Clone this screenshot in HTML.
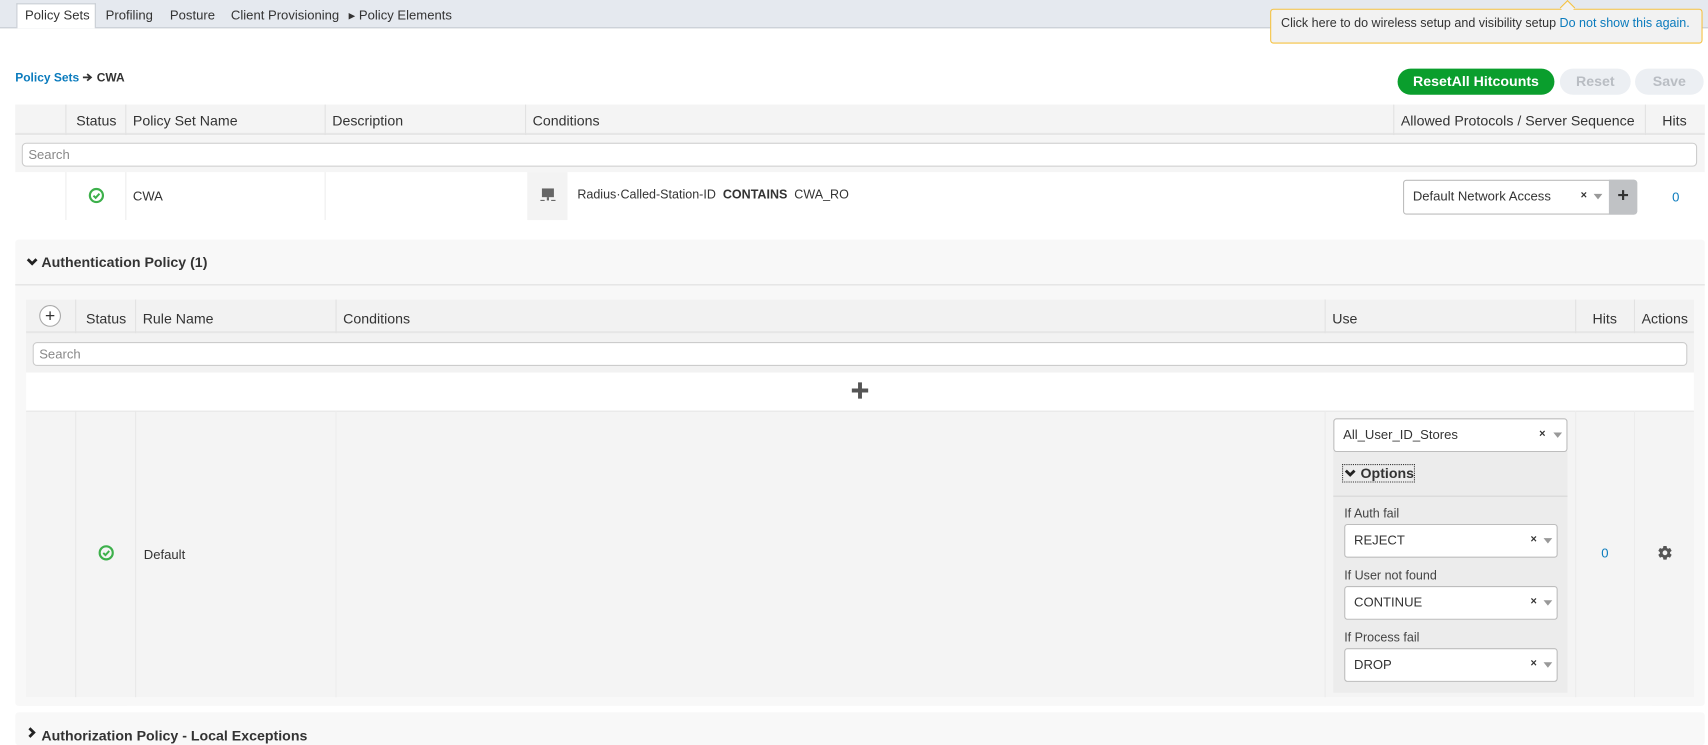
<!DOCTYPE html>
<html><head><meta charset="utf-8"><style>
html,body{margin:0;padding:0;background:#fff;width:1708px;height:739px;overflow:hidden}
#w{position:absolute;left:0;top:0;width:1568px;height:678px;transform:scale(1.0893);transform-origin:0 0;font-family:"Liberation Sans",Arial,sans-serif;font-size:12px;color:#333}
.a{position:absolute}
.t{position:absolute;white-space:nowrap}
.bold{font-weight:bold}
.blue{color:#0a7bbd}
.vl{position:absolute;width:1px;background:#e2e2e2}
.sel{position:absolute;background:#fff;border:1px solid #bdbdbd;border-radius:3px;box-sizing:border-box}
.sel .x{position:absolute;font-size:10px;font-weight:bold;color:#333}
.sel .v{position:absolute;width:0;height:0;border-left:4px solid transparent;border-right:4px solid transparent;border-top:5px solid #999}
.inp{position:absolute;background:#fff;border:1px solid #ccc;border-radius:4px;box-sizing:border-box;color:#888;font-size:12px;padding:3px 5px}
</style></head><body><div id="w">
<div class="a" style="left:0;top:0;width:1568px;height:25px;background:#e5e9ef;border-bottom:1px solid #c6cbd2"></div>
<div class="a" style="left:15px;top:3px;width:73px;height:23px;background:#fff;border:1px solid #c6cbd2;border-bottom:none;box-sizing:border-box"></div>
<div class="t" style="left:23px;top:7px">Policy Sets</div>
<div class="t" style="left:97px;top:7px">Profiling</div>
<div class="t" style="left:156px;top:7px">Posture</div>
<div class="t" style="left:212px;top:7px">Client Provisioning</div>
<div class="t" style="left:320px;top:7px"><span style="font-size:8px;position:relative;top:-1px">▶</span> Policy Elements</div>
<div class="a" style="left:1166px;top:8px;width:397px;height:32px;background:#f2f2f2;border:1px solid #f5c242;border-radius:3px;box-sizing:border-box"></div>
<div class="a" style="left:1434px;top:2px;width:9px;height:9px;background:#f2f2f2;border-left:1px solid #f5c242;border-top:1px solid #f5c242;transform:rotate(45deg)"></div>
<div class="t" style="left:1176px;top:16px;font-size:11.5px">Click here to do wireless setup and visibility setup <span class="blue">Do not show this again.</span></div>
<svg class="a" style="left:1574px;top:9px" width="10" height="10" viewBox="0 0 10 10"><path d="M1 1L9 9M9 1L1 9" stroke="#aaa" stroke-width="2"/></svg>
<div class="t bold" style="left:14px;top:66px;font-size:11px"><span class="blue">Policy Sets</span> <svg width="10" height="8" viewBox="0 0 10 8" style="vertical-align:0"><path d="M0 4H7M4 1L7.5 4L4 7" stroke="#333" stroke-width="1.6" fill="none"/></svg> CWA</div>
<div class="a" style="left:1283px;top:63px;width:144px;height:24px;background:#0a9e2d;border-radius:12px;color:#fff;font-weight:bold;font-size:13px;text-align:center;line-height:24px">ResetAll Hitcounts</div>
<div class="a" style="left:1432px;top:63px;width:65px;height:24px;background:#eceff3;border-radius:12px;color:#b9bdc3;font-weight:bold;font-size:13px;text-align:center;line-height:24px">Reset</div>
<div class="a" style="left:1501px;top:63px;width:63px;height:24px;background:#eceff3;border-radius:12px;color:#b9bdc3;font-weight:bold;font-size:13px;text-align:center;line-height:24px">Save</div>
<div class="a" style="left:14px;top:96px;width:1551px;height:28px;background:#f4f4f4;border-bottom:2px solid #e6e6e6;box-sizing:border-box"></div>
<div class="vl" style="left:60px;top:96px;height:28px"></div>
<div class="vl" style="left:115px;top:96px;height:28px"></div>
<div class="vl" style="left:298px;top:96px;height:28px"></div>
<div class="vl" style="left:482px;top:96px;height:28px"></div>
<div class="vl" style="left:1279px;top:96px;height:28px"></div>
<div class="vl" style="left:1510px;top:96px;height:28px"></div>
<div class="t" style="left:70px;top:103px;font-size:13px">Status</div>
<div class="t" style="left:122px;top:103px;font-size:13px">Policy Set Name</div>
<div class="t" style="left:305px;top:103px;font-size:13px">Description</div>
<div class="t" style="left:489px;top:103px;font-size:13px">Conditions</div>
<div class="t" style="left:1286px;top:103px;font-size:13px">Allowed Protocols / Server Sequence</div>
<div class="t" style="left:1526px;top:103px;font-size:13px">Hits</div>
<div class="a" style="left:14px;top:124px;width:1551px;height:34px;background:#f5f5f5"></div>
<div class="inp" style="left:20px;top:131px;width:1538px;height:22px;padding-top:3px">Search</div>
<div class="vl" style="left:60px;top:158px;height:44px;background:#eee"></div>
<div class="vl" style="left:115px;top:158px;height:44px;background:#eee"></div>
<div class="vl" style="left:298px;top:158px;height:44px;background:#eee"></div>
<svg class="a" style="left:81px;top:172px" width="15" height="15" viewBox="0 0 15 15"><circle cx="7.5" cy="7.5" r="6" fill="none" stroke="#3db04b" stroke-width="2"/><path d="M4.8 7.6l2 2 3.5-3.8" fill="none" stroke="#3db04b" stroke-width="1.8"/></svg>
<div class="t" style="left:122px;top:173px">CWA</div>
<div class="a" style="left:484px;top:158px;width:37px;height:44px;background:#f3f3f3"></div>
<svg class="a" style="left:496px;top:172px" width="14" height="14" viewBox="0 0 14 14"><rect x="1.5" y="1" width="11" height="8" fill="#666"/><rect x="6" y="9" width="2" height="3" fill="#666"/><rect x="0" y="11.5" width="4" height="1" fill="#666"/><rect x="10" y="11.5" width="4" height="1" fill="#666"/></svg>
<div class="t" style="left:530px;top:173px;font-size:11.5px">Radius·Called-Station-ID&nbsp; <b>CONTAINS</b>&nbsp; CWA_RO</div>
<div class="sel" style="left:1288px;top:165px;width:215px;height:32px"><div class="t" style="left:8px;top:7px;font-size:12px">Default Network Access</div><div class="x" style="left:162px;top:8px">×</div><div class="v" style="left:174px;top:12px"></div><div class="a" style="left:188px;top:-1px;width:26px;height:32px;background:#c0c2c5;border-radius:0 3px 3px 0;font-size:18px;font-weight:bold;text-align:center;line-height:28px;color:#333">+</div></div>
<div class="t blue" style="left:1535px;top:174px">0</div>
<div class="a" style="left:14px;top:220px;width:1551px;height:428px;background:#f8f8f8;border-radius:3px"></div>
<div class="a" style="left:14px;top:261px;width:1551px;height:1px;background:#ddd"></div>
<svg class="a" style="left:24px;top:236px" width="11" height="9" viewBox="0 0 11 9"><path d="M1.5 2L5.5 6L9.5 2" stroke="#222" stroke-width="2.6" fill="none"/></svg>
<div class="t bold" style="left:38px;top:233px;font-size:13px">Authentication Policy (1)</div>
<div class="a" style="left:24px;top:275px;width:1531px;height:31px;background:#f2f2f2;border-bottom:2px solid #e6e6e6;box-sizing:border-box"></div>
<div class="a" style="left:36px;top:280px;width:20px;height:20px;border:1px solid #aaa;border-radius:50%;background:#fff;text-align:center;line-height:19px;font-size:16px;box-sizing:border-box">+</div>
<div class="vl" style="left:69px;top:275px;height:31px"></div>
<div class="vl" style="left:124px;top:275px;height:31px"></div>
<div class="vl" style="left:308px;top:275px;height:31px"></div>
<div class="vl" style="left:1216px;top:275px;height:31px"></div>
<div class="vl" style="left:1446px;top:275px;height:31px"></div>
<div class="vl" style="left:1500px;top:275px;height:31px"></div>
<div class="t" style="left:79px;top:285px;font-size:13px">Status</div>
<div class="t" style="left:131px;top:285px;font-size:13px">Rule Name</div>
<div class="t" style="left:315px;top:285px;font-size:13px">Conditions</div>
<div class="t" style="left:1223px;top:285px;font-size:13px">Use</div>
<div class="t" style="left:1462px;top:285px;font-size:13px">Hits</div>
<div class="t" style="left:1507px;top:285px;font-size:13px">Actions</div>
<div class="a" style="left:24px;top:306px;width:1531px;height:36px;background:#f2f2f2"></div>
<div class="inp" style="left:30px;top:314px;width:1519px;height:22px">Search</div>
<div class="a" style="left:24px;top:342px;width:1531px;height:35px;background:#fff"></div>
<svg class="a" style="left:781px;top:350px" width="17" height="17" viewBox="0 0 17 17"><path d="M8.5 1V16M1 8.5H16" stroke="#555" stroke-width="3.6"/></svg>
<div class="a" style="left:24px;top:377px;width:1531px;height:263px;background:#f4f4f4;border-top:1px solid #e6e6e6;box-sizing:border-box"></div>
<div class="vl" style="left:69px;top:377px;height:263px;background:#e8e8e8"></div>
<div class="vl" style="left:124px;top:377px;height:263px;background:#e8e8e8"></div>
<div class="vl" style="left:308px;top:377px;height:263px;background:#ececec"></div>
<div class="vl" style="left:1216px;top:377px;height:263px;background:#ececec"></div>
<div class="vl" style="left:1446px;top:377px;height:263px;background:#ececec"></div>
<div class="vl" style="left:1500px;top:377px;height:263px;background:#ececec"></div>
<svg class="a" style="left:90px;top:500px" width="15" height="15" viewBox="0 0 15 15"><circle cx="7.5" cy="7.5" r="6" fill="none" stroke="#3db04b" stroke-width="2"/><path d="M4.8 7.6l2 2 3.5-3.8" fill="none" stroke="#3db04b" stroke-width="1.8"/></svg>
<div class="t" style="left:132px;top:502px">Default</div>
<div class="a" style="left:1224px;top:414px;width:215px;height:222px;background:#ececec"></div>
<div class="a" style="left:1224px;top:455px;width:215px;height:1px;background:#d6d6d6"></div>
<div class="sel" style="left:1224px;top:384px;width:215px;height:31px"><div class="t" style="left:8px;top:7px">All_User_ID_Stores</div><div class="x" style="left:188px;top:8px">×</div><div class="v" style="left:201px;top:12px"></div></div>
<div class="a" style="left:1233px;top:427px;width:65px;height:15px;outline:1px dotted #333"></div>
<svg class="a" style="left:1234px;top:430px" width="11" height="9" viewBox="0 0 11 9"><path d="M1.5 2L5.5 6L9.5 2" stroke="#222" stroke-width="2.6" fill="none"/></svg>
<div class="t bold" style="left:1249px;top:427px;font-size:13px">Options</div>
<div class="t" style="left:1234px;top:466px;font-size:11.5px;color:#444">If Auth fail</div>
<div class="sel" style="left:1234px;top:481px;width:196px;height:31px"><div class="t" style="left:8px;top:7px">REJECT</div><div class="x" style="left:170px;top:8px">×</div><div class="v" style="left:182px;top:12px"></div></div>
<div class="t" style="left:1234px;top:523px;font-size:11.5px;color:#444">If User not found</div>
<div class="sel" style="left:1234px;top:538px;width:196px;height:31px"><div class="t" style="left:8px;top:7px">CONTINUE</div><div class="x" style="left:170px;top:8px">×</div><div class="v" style="left:182px;top:12px"></div></div>
<div class="t" style="left:1234px;top:580px;font-size:11.5px;color:#444">If Process fail</div>
<div class="sel" style="left:1234px;top:595px;width:196px;height:31px"><div class="t" style="left:8px;top:7px">DROP</div><div class="x" style="left:170px;top:8px">×</div><div class="v" style="left:182px;top:12px"></div></div>
<div class="t blue" style="left:1470px;top:501px">0</div>
<svg class="a" style="left:1521px;top:500px" width="15" height="15" viewBox="0 0 24 24"><path fill="#555" d="M19.4 13c.04-.33.06-.66.06-1s-.02-.67-.06-1l2.1-1.650c.2-.15.25-.42.13-.64l-2-3.46c-.12-.22-.39-.3-.61-.22l-2.49 1c-.52-.4-1.080-.73-1.690-.98l-.38-2.650A.49.49 0 0 0 14 2h-4c-.25 0-.46.18-.49.42l-.38 2.650c-.61.25-1.170.59-1.690.98l-2.490-1c-.23-.09-.49 0-.61.22l-2 3.460c-.13.22-.07.49.12.64L4.570 11c-.04.33-.07.67-.07 1s.03.67.07 1l-2.110 1.650c-.19.15-.24.42-.12.64l2 3.460c.12.22.39.3.61.22l2.490-1c.52.4 1.080.73 1.690.98l.38 2.650c.03.24.24.42.49.42h4c.25 0 .46-.18.49-.42l.38-2.650c.61-.25 1.170-.59 1.690-.98l2.490 1c.23.09.49 0 .61-.22l2-3.460c.12-.22.07-.49-.12-.64L19.4 13zM12 15.5A3.5 3.5 0 1 1 12 8.5a3.5 3.5 0 0 1 0 7z"/></svg>
<div class="a" style="left:14px;top:654px;width:1551px;height:30px;background:#f8f8f8;border-radius:3px"></div>
<svg class="a" style="left:25px;top:667px" width="9" height="11" viewBox="0 0 9 11"><path d="M2 1.5L6 5.5L2 9.5" stroke="#222" stroke-width="2.6" fill="none"/></svg>
<div class="t bold" style="left:38px;top:668px;font-size:13px">Authorization Policy - Local Exceptions</div>
</div></body></html>
